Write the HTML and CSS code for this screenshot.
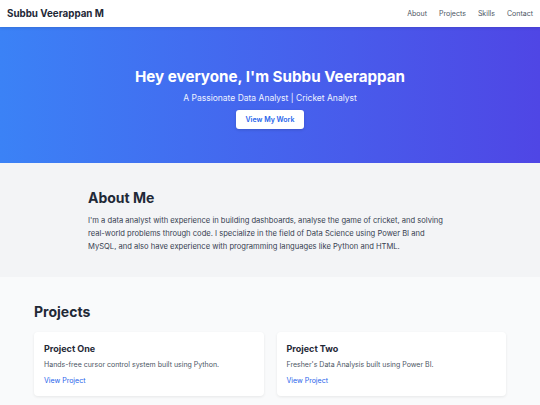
FILE: index.html
```html
<!DOCTYPE html>
<html lang="en">
<head>
  <meta charset="UTF-8">
  <meta name="viewport" content="width=device-width, initial-scale=1.0">
  <title>Subbu Veerappan M</title>
  <link rel="stylesheet" href="styles.css">
</head>
<body>
  <header class="top">
    <div class="logo">Subbu Veerappan M</div>
    <nav class="menu">
      <a href="#about">About</a>
      <a href="#projects">Projects</a>
      <a href="#skills">Skills</a>
      <a href="#contact">Contact</a>
    </nav>
  </header>

  <section class="hero">
    <h1>Hey everyone, I'm Subbu Veerappan</h1>
    <p>A Passionate Data Analyst | Cricket Analyst</p>
    <a class="btn" href="#projects">View My Work</a>
  </section>

  <section class="about" id="about">
    <div class="wrap">
      <h2>About Me</h2>
      <p>I'm a data analyst with experience in building dashboards, analyse the game of cricket, and solving real-world problems through code. I specialize in the field of Data Science using Power BI and MySQL, and also have experience with programming languages like Python and HTML.</p>
    </div>
  </section>

  <section class="projects" id="projects">
    <h2>Projects</h2>
    <div class="cards">
      <div class="card">
        <h3>Project One</h3>
        <p>Hands-free cursor control system built using Python.</p>
        <a href="#">View Project</a>
      </div>
      <div class="card">
        <h3>Project Two</h3>
        <p>Fresher's Data Analysis built using Power BI.</p>
        <a href="#">View Project</a>
      </div>
    </div>
  </section>
</body>
</html>
```
FILE: styles.css
```css
body {
  margin: 0;
  font-family: Inter, "Noto Sans", sans-serif;
  font-size: 8px;
  background: #f9fafb;
  color: #1f2937;
}

.top {
  display: flex;
  justify-content: space-between;
  align-items: center;
  height: 27px;
  padding: 0 7px;
  background: white;
  box-shadow: 0 1px 3px rgba(0, 0, 0, 0.12);
  position: relative;
  z-index: 2;
}

.logo {
  font-size: 9.8px;
  font-weight: 700;
  color: #1f2937;
}

.menu {
  display: flex;
  gap: 12px;
}

.menu a {
  font-size: 7px;
  color: #4b5563;
  text-decoration: none;
}

.hero {
  height: 136px;
  box-sizing: border-box;
  padding-top: 40px;
  text-align: center;
  color: white;
  background: linear-gradient(to right, #3b82f6, #4f46e5);
}

.hero h1 {
  margin: 0;
  font-size: 15.2px;
  font-weight: 700;
}

.hero p {
  margin: 7px 0 7px;
  font-size: 8.5px;
  color: #eef2ff;
}

.btn {
  display: inline-block;
  padding: 5px 10px;
  font-size: 7px;
  font-weight: 600;
  color: #2563eb;
  background: white;
  border-radius: 3px;
  text-decoration: none;
  box-shadow: 0 1px 3px rgba(0, 0, 0, 0.15);
}

.about {
  background: #f3f4f6;
  padding: 26px 0 24px;
}

.wrap {
  max-width: 364px;
  margin: 0 auto;
}

.about h2 {
  margin: 0 0 8px;
  font-size: 14px;
  font-weight: 700;
}

.about p {
  margin: 0;
  font-size: 7.6px;
  line-height: 13px;
  color: #374151;
}

.projects {
  padding: 26px 34px;
}

.projects h2 {
  margin: 0 0 12px;
  font-size: 14px;
  font-weight: 700;
}

.cards {
  display: flex;
  gap: 13px;
}

.card {
  flex: 1;
  background: white;
  border-radius: 4px;
  padding: 11px 10px;
  font-size: 7px;
  box-shadow: 0 1px 3px rgba(0, 0, 0, 0.08);
}

.card h3 {
  margin: 0 0 6px;
  font-size: 9px;
  font-weight: 700;
}

.card p {
  margin: 0 0 7px;
  color: #4b5563;
}

.card a {
  display: block;
  color: #2563eb;
  text-decoration: none;
}
```
